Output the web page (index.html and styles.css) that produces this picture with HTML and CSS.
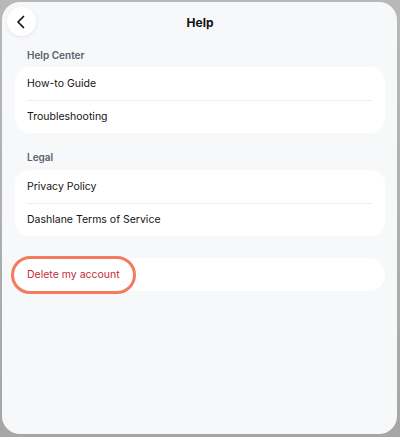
FILE: index.html
```html
<!DOCTYPE html>
<html>
<head>
<meta charset="utf-8">
<link rel="stylesheet" href="styles.css">
</head>
<body>
<div class="frame">
  <div class="sheet">
    <header class="topbar">
      <button class="back" aria-label="Back">
        <svg width="14" height="14" viewBox="0 0 14 14"><path d="M9.5 1.5 L4 7 L9.5 12.5" fill="none" stroke="#111" stroke-width="1.7" stroke-linecap="round" stroke-linejoin="round"/></svg>
      </button>
      <h1 class="title">Help</h1>
    </header>

    <div class="section-label first">Help Center</div>
    <div class="card">
      <div class="row">How-to Guide</div>
      <div class="divider"></div>
      <div class="row">Troubleshooting</div>
    </div>

    <div class="section-label">Legal</div>
    <div class="card">
      <div class="row">Privacy Policy</div>
      <div class="divider"></div>
      <div class="row">Dashlane Terms of Service</div>
    </div>

    <div class="card card-single">
      <div class="row danger"><span class="highlight">Delete my account</span></div>
    </div>
  </div>
</div>
</body>
</html>
```

FILE: styles.css
```css
* { box-sizing: border-box; }
html, body { margin: 0; padding: 0; }
body {
  width: 400px;
  height: 437px;
  font-family: Inter, "Liberation Sans", sans-serif;
  background: #a9a9a9;
  overflow: hidden;
}
.frame {
  width: 400px;
  height: 437px;
  padding: 2px 3px 3px 2px;
  background: linear-gradient(#b8b8b8, #a6a6a6);
}
.sheet {
  width: 395px;
  height: 432px;
  background: #f7f8fa;
  border-radius: 18px;
  padding: 0 12px 0 13px;
  display: flex;
  flex-direction: column;
}
.topbar {
  position: relative;
  height: 38px;
  flex: none;
  display: flex;
  align-items: center;
  justify-content: center;
}
.back {
  position: absolute;
  left: -8px;
  top: 5px;
  width: 29px;
  height: 29px;
  border-radius: 50%;
  border: none;
  background: #fff;
  box-shadow: 0 1px 4px rgba(0,0,0,0.08);
  display: flex;
  align-items: center;
  justify-content: center;
  padding: 0 2px 0 0;
}
.title {
  margin: 0;
  font-size: 12px;
  font-weight: 700;
  color: #111;
  padding-top: 2px;
}
.section-label {
  flex: none;
  font-size: 10px;
  font-weight: 600;
  color: #5a626c;
  padding: 10px 0 0 12px;
  height: 29px;
}
.section-label.first {
  height: 27px;
  padding-top: 9px;
}
.card {
  flex: none;
  background: #fff;
  border-radius: 14px;
  padding: 0 13px 0 12px;
  margin-bottom: 8px;
}
.row {
  height: 32.5px;
  display: flex;
  align-items: center;
  font-size: 10.5px;
  color: #141414;
}
.divider {
  height: 1px;
  background: #ececec;
}
.card-single {
  margin-top: 14px;
  border-radius: 17px;
}
.danger { color: #c22a36; }
.highlight {
  position: relative;
  line-height: 13px;
}
.highlight::before {
  content: "";
  position: absolute;
  left: -16px;
  right: -16px;
  top: -12px;
  bottom: -13px;
  border: 3px solid #f47b5e;
  border-radius: 20px;
}
```
